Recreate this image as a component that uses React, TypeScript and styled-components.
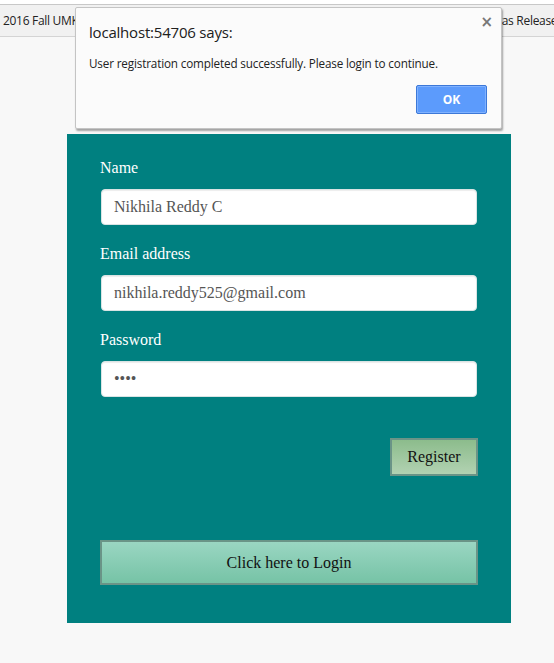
import React from "react";
import styled, { createGlobalStyle } from "styled-components";

const Global = createGlobalStyle`
  html, body { margin: 0; padding: 0; }
  body {
    background: #f8f8f8;
    width: 554px;
    height: 663px;
    overflow: hidden;
    font-family: "Liberation Serif", "Times New Roman", serif;
  }
`;

const Page = styled.div`
  position: relative;
  width: 554px;
  height: 663px;
  display: flex;
  flex-direction: column;
`;

const TopStrip = styled.div`
  height: 4px;
  background: #ffffff;
  border-bottom: 1px solid #c8c8c8;
`;

const BookmarkBar = styled.div`
  height: 31px;
  background: #f1f1f1;
  border-bottom: 1px solid #d4d4d4;
  display: flex;
  align-items: center;
  font-family: "Open Sans", "Noto Sans", sans-serif;
  font-size: 12px;
  color: #222;
  white-space: nowrap;
  overflow: hidden;
`;

const Bookmark = styled.span<{ $left: number }>`
  margin-left: ${(p) => p.$left}px;
  letter-spacing: -0.3px;
`;

const Main = styled.main`
  padding: 97px 0 0 67px;
`;

const Card = styled.form`
  width: 444px;
  height: 489px;
  box-sizing: border-box;
  background: #008080;
  padding: 23px 33px 38px 33px;
  display: flex;
  flex-direction: column;
`;

const Group = styled.div`
  display: flex;
  flex-direction: column;
  margin-bottom: 18px;
`;

const Label = styled.label`
  color: #ffffff;
  font-size: 16px;
  line-height: 22px;
  margin-bottom: 10px;
`;

const Input = styled.input`
  box-sizing: border-box;
  width: 376px;
  height: 36px;
  margin-left: 1px;
  border: 1px solid #d9e4e4;
  border-radius: 4px;
  background: #ffffff;
  padding: 0 12px;
  font-family: "Liberation Serif", "Times New Roman", serif;
  font-size: 16px;
  color: #555555;
  outline: none;
  box-shadow: inset 0 1px 1px rgba(0, 0, 0, 0.075);
`;

const RegisterRow = styled.div`
  display: flex;
  justify-content: flex-end;
  margin-top: 23px;
`;

const GradientButton = styled.button<{ $from: string; $to: string; $w: number; $h: number }>`
  box-sizing: border-box;
  width: ${(p) => p.$w}px;
  height: ${(p) => p.$h}px;
  background: linear-gradient(to bottom, ${(p) => p.$from}, ${(p) => p.$to});
  border: 2px solid #6a9487;
  font-family: "Liberation Serif", "Times New Roman", serif;
  font-size: 16px;
  color: #111;
  padding: 0;
  cursor: pointer;
`;

const LoginButton = styled(GradientButton)`
  margin-top: 64px;
`;

const Dialog = styled.div`
  position: absolute;
  left: 75px;
  top: 7px;
  width: 427px;
  height: 122px;
  box-sizing: border-box;
  background: #fbfbfb;
  border: 1px solid #c4c4c4;
  border-radius: 2px;
  box-shadow: 1px 2px 2px rgba(0, 0, 0, 0.35);
  font-family: "Open Sans", "Noto Sans", sans-serif;
  padding: 13px 14px 0 13px;
  display: flex;
  flex-direction: column;
`;

const DialogTitle = styled.div`
  font-size: 15px;
  color: #202020;
  line-height: 22px;
  letter-spacing: -0.2px;
`;

const DialogMessage = styled.div`
  margin-top: 11px;
  font-size: 11.7px;
  color: #222;
  line-height: 18px;
  letter-spacing: -0.15px;
`;

const DialogActions = styled.div`
  display: flex;
  justify-content: flex-end;
  margin-top: 13px;
`;

const OkButton = styled.button`
  width: 71px;
  height: 29px;
  box-sizing: border-box;
  background: #5c9bfc;
  border: 1px solid #3c78d8;
  border-radius: 2px;
  box-shadow: inset 0 0 0 1px #80b2ff;
  color: #ffffff;
  font-family: "Open Sans", "Noto Sans", sans-serif;
  font-weight: 700;
  font-size: 12px;
  padding: 0;
`;

const Close = styled.span`
  position: absolute;
  right: 8px;
  top: 5px;
  font-family: "DejaVu Sans", sans-serif;
  font-size: 15px;
  font-weight: 700;
  color: #777;
`;

export default function App() {
  return (
    <Page>
      <Global />
      <TopStrip />
      <BookmarkBar>
        <Bookmark $left={3}>2016 Fall UMKC Canvas Home</Bookmark>
        <Bookmark $left={313}>Canvas Release Notes</Bookmark>
      </BookmarkBar>
      <Main>
        <Card onSubmit={(e) => e.preventDefault()}>
          <Group>
            <Label>Name</Label>
            <Input type="text" defaultValue="Nikhila Reddy C" />
          </Group>
          <Group>
            <Label>Email address</Label>
            <Input type="text" defaultValue="nikhila.reddy525@gmail.com" />
          </Group>
          <Group>
            <Label>Password</Label>
            <Input type="password" defaultValue="1234" />
          </Group>
          <RegisterRow>
            <GradientButton type="button" $from="#8cbc8c" $to="#b2d2b2" $w={88} $h={38}>
              Register
            </GradientButton>
          </RegisterRow>
          <LoginButton type="button" $from="#9ad6c2" $to="#76c3a6" $w={378} $h={45}>
            Click here to Login
          </LoginButton>
        </Card>
      </Main>
      <Dialog>
        <Close>×</Close>
        <DialogTitle>localhost:54706 says:</DialogTitle>
        <DialogMessage>User registration completed successfully. Please login to continue.</DialogMessage>
        <DialogActions>
          <OkButton type="button">OK</OkButton>
        </DialogActions>
      </Dialog>
    </Page>
  );
}
